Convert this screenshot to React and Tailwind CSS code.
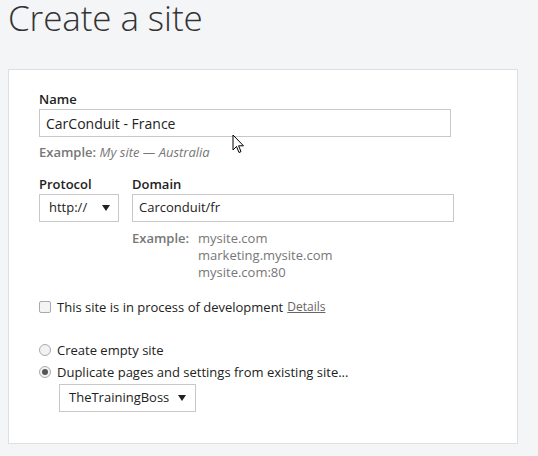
import React from "react";

const font = { fontFamily: '"Open Sans", "Noto Sans", sans-serif' };

function Caret() {
  return (
    <svg width="8" height="6" viewBox="0 0 8 6" className="shrink-0">
      <path d="M0 0 L8 0 L4 6 Z" fill="#222" />
    </svg>
  );
}

export default function App() {
  return (
    <div className="relative w-[538px] h-[456px] bg-[#f4f5f7] text-[#333] overflow-hidden" style={font}>
      <h1 className="pl-[8px] -mt-[6px] text-[35px] leading-[48px] font-light text-[#333] tracking-[-0.1px]">
        Create a site
      </h1>
      <div className="ml-[8px] mt-[27px] w-[510px] h-[375px] bg-white border border-[#dfdfdf] pl-[30px] pt-[20px]">
        <div className="text-[13px] leading-[18px] font-semibold text-[#222]">Name</div>
        <div className="mt-[1px] w-[412px] h-[28px] border border-[#c8c8c8] flex items-center pl-[6px] text-[14px] text-[#222]">
          CarConduit - France
        </div>
        <div className="mt-[6px] text-[13px] leading-[18px] text-[#777]">
          <span className="font-semibold">Example:</span> <span className="italic">My site — Australia</span>
        </div>
        <div className="mt-[14px] flex gap-[13px]">
          <div>
            <div className="text-[13px] leading-[18px] font-semibold text-[#222]">Protocol</div>
            <div className="mt-[1px] w-[80px] h-[28px] border border-[#c8c8c8] flex items-center justify-between pl-[9px] pr-[8px] text-[13px] text-[#222]">
              http://
              <Caret />
            </div>
          </div>
          <div>
            <div className="text-[13px] leading-[18px] font-semibold text-[#222]">Domain</div>
            <div className="mt-[1px] w-[322px] h-[28px] border border-[#c8c8c8] flex items-center pl-[6px] text-[13px] text-[#222]">
              Carconduit/fr
            </div>
            <div className="mt-[8px] flex text-[13px] leading-[17px] text-[#777]">
              <div className="w-[66px] font-semibold">Example:</div>
              <div>
                <div>mysite.com</div>
                <div>marketing.mysite.com</div>
                <div>mysite.com:80</div>
              </div>
            </div>
          </div>
        </div>
        <div className="mt-[17px] flex items-center text-[13px] leading-[18px] text-[#222]">
          <span className="w-[12px] h-[12px] border border-[#aaa] rounded-[2px] bg-[#f4f4f4] mr-[6px]" />
          <span>This site is in process of development</span>
          <span className="ml-[4px] text-[12px] text-[#666] underline">Details</span>
        </div>
        <div className="mt-[25px] flex items-center text-[13px] leading-[18px] text-[#222]">
          <span className="w-[12px] h-[12px] rounded-full border border-[#aaa] bg-[#f2f2f2] mr-[6px]" />
          Create empty site
        </div>
        <div className="mt-[4px] flex items-center text-[13px] leading-[18px] text-[#222]">
          <span className="w-[12px] h-[12px] rounded-full border border-[#aaa] bg-[#f2f2f2] mr-[6px] flex items-center justify-center">
            <span className="w-[6px] h-[6px] rounded-full bg-[#555]" />
          </span>
          Duplicate pages and settings from existing site...
        </div>
        <div className="mt-[3px] ml-[20px] w-[137px] h-[28px] border border-[#c8c8c8] flex items-center justify-between pl-[9px] pr-[9px] text-[13px] text-[#222]">
          TheTrainingBoss
          <Caret />
        </div>
      </div>
      <svg className="absolute left-[232px] top-[134px]" width="13" height="20" viewBox="0 0 13 20">
        <path d="M1 1 L1 16 L4.5 12.5 L7 18.5 L9 17.6 L6.6 11.8 L11.5 11.8 Z" fill="#fff" stroke="#000" strokeWidth="1" strokeLinejoin="round" />
      </svg>
    </div>
  );
}
